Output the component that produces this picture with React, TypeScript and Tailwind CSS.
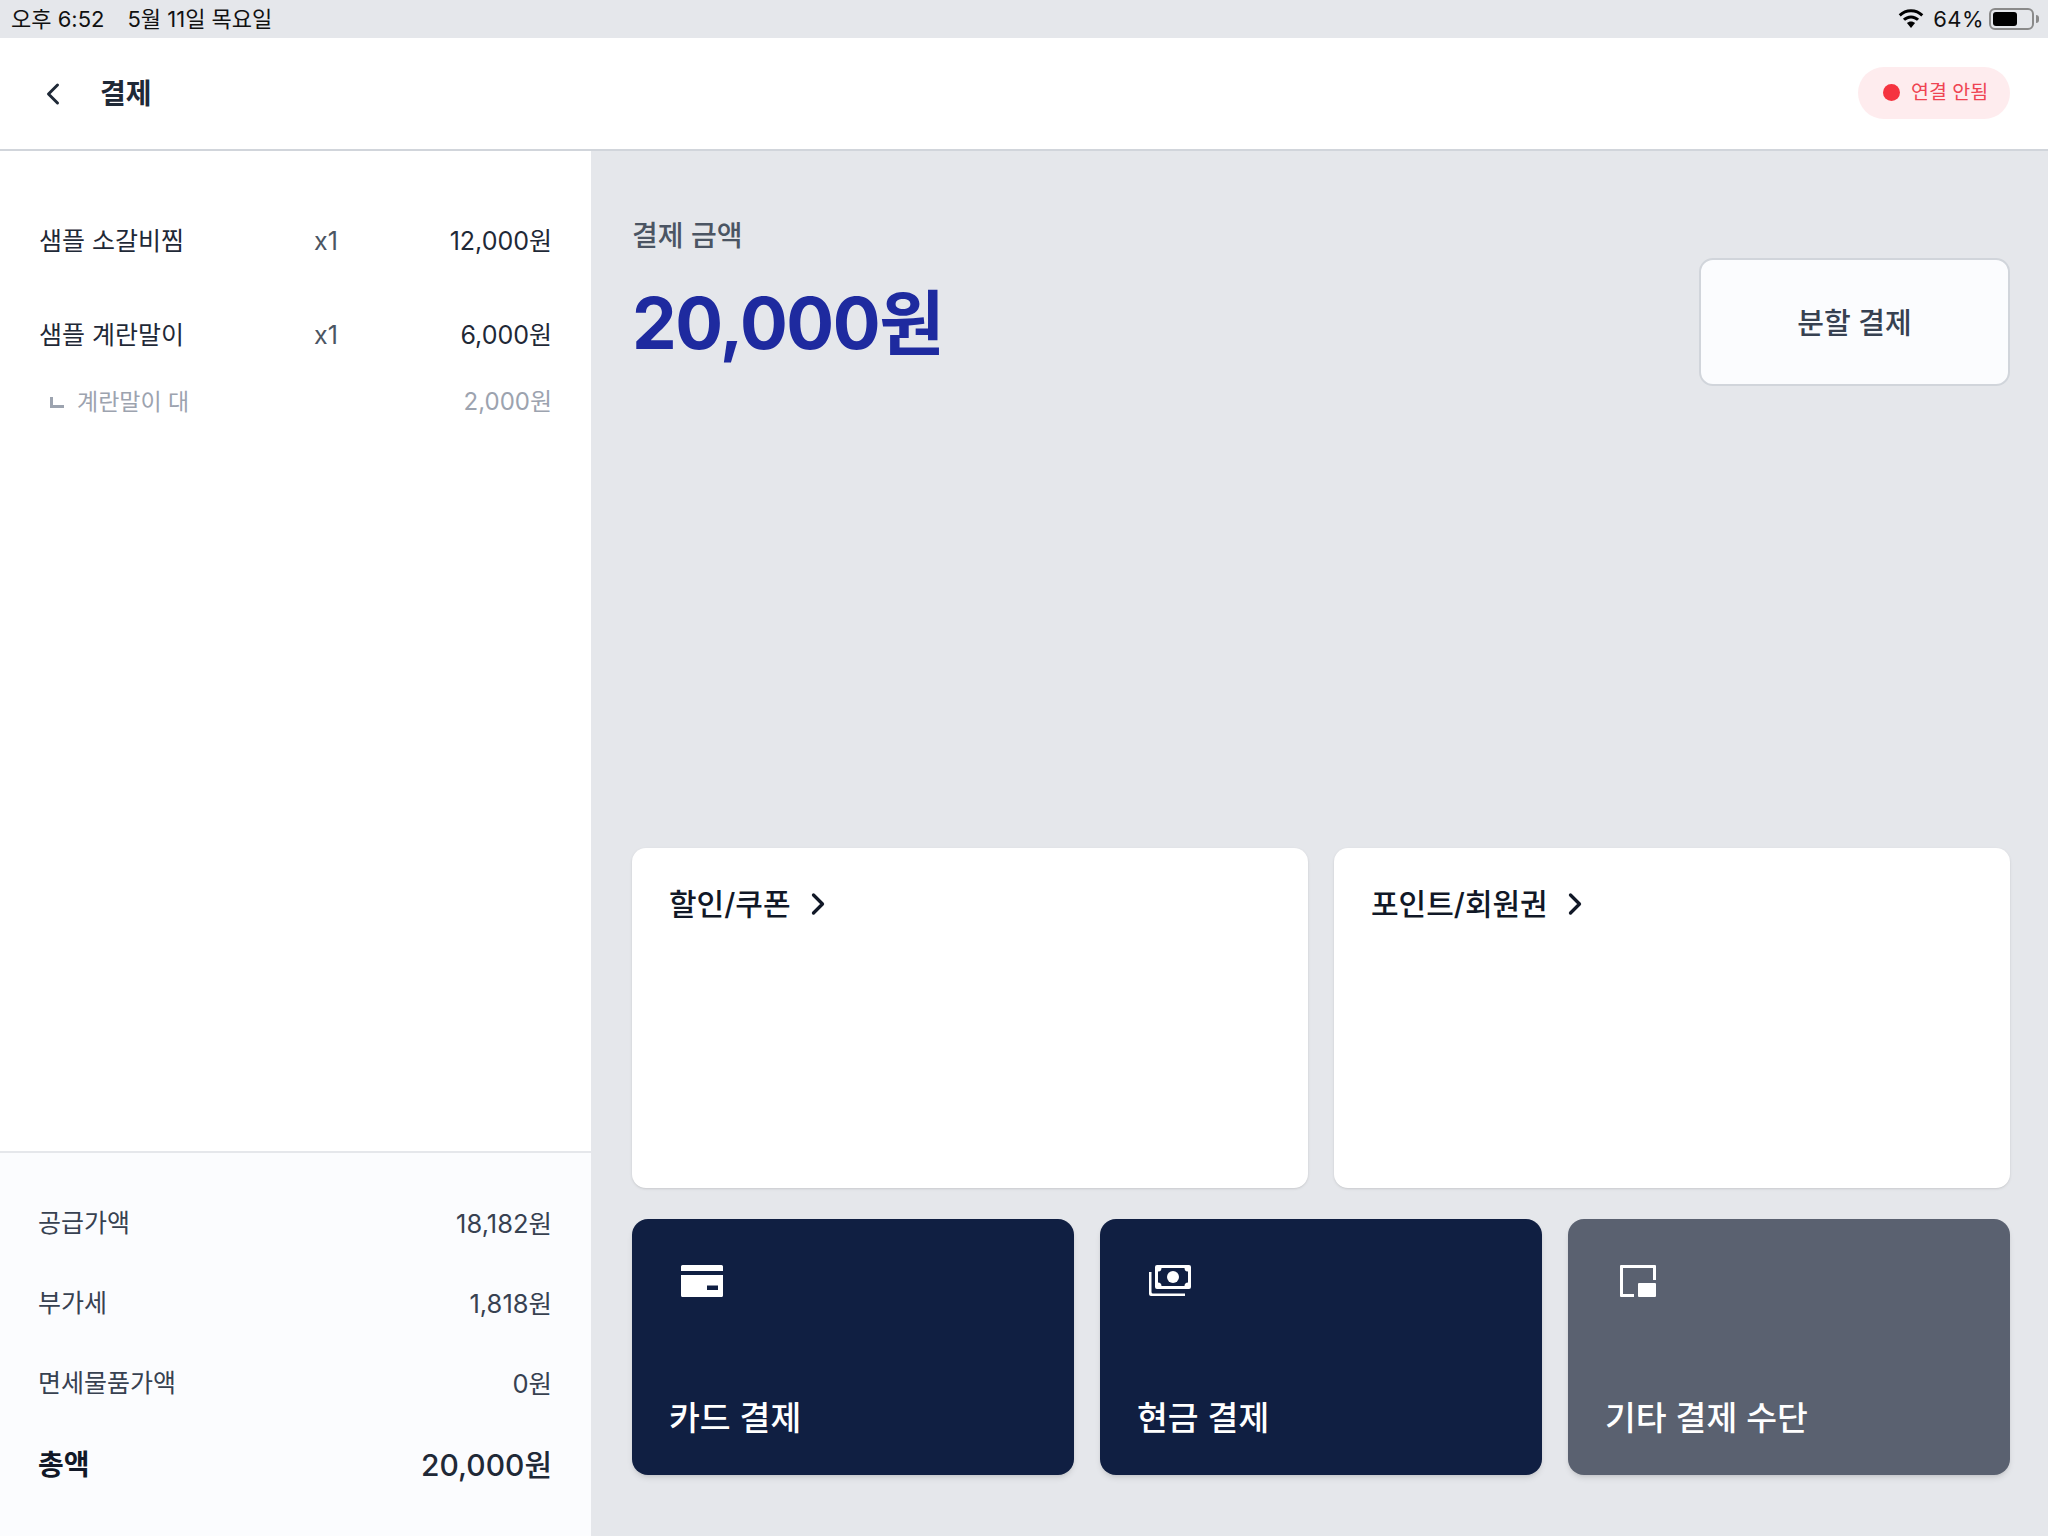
import React from 'react';
import { ChevronLeft, ChevronRight } from 'lucide-react';

const items = [
  { name: '샘플 소갈비찜', qty: 'x1', price: '12,000원' },
  { name: '샘플 계란말이', qty: 'x1', price: '6,000원' },
];

const summary = [
  { label: '공급가액', value: '18,182원' },
  { label: '부가세', value: '1,818원' },
  { label: '면세물품가액', value: '0원' },
];

const WifiIcon = () => (
  <svg width="28" height="21" viewBox="0 0 26 20" fill="#000">
    <path d="M13 3.2c3.8 0 7.2 1.5 9.8 3.9l1.9-2.1C21.6 2 17.5.2 13 .2S4.400 2 1.300 5l1.900 2.100C5.800 4.700 9.200 3.200 13 3.200z" />
    <path d="M13 9c2.200 0 4.200.9 5.700 2.300l2-2.100C18.700 7.300 16 6.100 13 6.100S7.300 7.300 5.300 9.200l2 2.100C8.800 9.900 10.800 9 13 9z" />
    <path d="M13 11.900c-1.500 0-2.900.6-3.900 1.500L13 18l3.900-4.600c-1-.9-2.400-1.500-3.900-1.500z" />
  </svg>
);

const CardIcon = () => (
  <svg width="42" height="32" viewBox="0 0 42 32" fill="#fff">
    <path d="M1.500 0h39A1.500 1.500 0 0 1 42 1.500V6H0V1.500A1.500 1.500 0 0 1 1.500 0z" />
    <path fillRule="evenodd" d="M0 10h42v20.500a1.500 1.500 0 0 1-1.500 1.500h-39A1.500 1.500 0 0 1 0 30.500V10zm26 10.500V25h11v-4.500H26z" />
  </svg>
);

const CashIcon = () => (
  <svg width="42" height="31" viewBox="0 0 42 31" fill="#fff">
    <path fillRule="evenodd" d="M8 0h32a2 2 0 0 1 2 2v20a2 2 0 0 1-2 2H8a2 2 0 0 1-2-2V2a2 2 0 0 1 2-2zm4.500 3A3.500 3.500 0 0 1 9 6.500v11a3.500 3.500 0 0 1 3.500 3.500h23a3.500 3.500 0 0 1 3.500-3.500v-11A3.500 3.500 0 0 1 35.500 3h-23z" />
    <circle cx="24" cy="12" r="6" />
    <path d="M0 7h2.500v20a1.500 1.500 0 0 0 1.500 1.500h32V31H2a2 2 0 0 1-2-2V7z" />
  </svg>
);

const OtherIcon = () => (
  <svg width="36" height="32" viewBox="0 0 36 32" fill="#fff">
    <path d="M1 0h34a1 1 0 0 1 1 1v14h-3V3H3v26h11v3H1a1 1 0 0 1-1-1V1a1 1 0 0 1 1-1z" />
    <rect x="18" y="18" width="18" height="14" rx="1" />
  </svg>
);

const payMethods = [
  { label: '카드 결제', icon: <CardIcon />, bg: 'bg-[#101f42]', indent: 'pl-[12px]' },
  { label: '현금 결제', icon: <CashIcon />, bg: 'bg-[#101f42]', indent: 'pl-[12px]' },
  { label: '기타 결제 수단', icon: <OtherIcon />, bg: 'bg-[#5a6170]', indent: 'pl-[15px]' },
];

export default function App() {
  return (
    <div
      lang="ko"
      className="flex h-[1536px] w-[2048px] flex-col overflow-hidden bg-[#e5e7eb] [font-family:Inter,'Noto_Sans_CJK_KR',sans-serif]"
    >
      {/* status bar */}
      <div className="flex h-[38px] items-center justify-between pl-[11px] pr-[9px] text-[22px] text-[#111]">
        <div className="flex gap-[23px]">
          <span>오후 6:52</span>
          <span>5월 11일 목요일</span>
        </div>
        <div className="flex items-center">
          <WifiIcon />
          <span className="ml-[8px] tracking-[0.02em]">64%</span>
          <div className="ml-[5px] flex h-[22px] w-[45px] items-center rounded-[6px] border-2 border-[#8a8a8a] pl-[2px]">
            <div className="h-[14px] w-[24px] rounded-[3px] bg-black" />
          </div>
          <div className="ml-[2px] h-[8px] w-[3px] rounded-r-full bg-[#8a8a8a]" />
        </div>
      </div>

      {/* header */}
      <div className="flex h-[113px] shrink-0 items-center justify-between border-b-2 border-[#d1d5db] bg-white pl-[35px] pr-[38px]">
        <div className="flex items-center">
          <ChevronLeft size={36} strokeWidth={2} className="text-[#1f2937]" />
          <h1 className="ml-[29px] text-[28px] font-bold text-[#1f2937]">결제</h1>
        </div>
        <div className="mb-[2px] flex h-[52px] w-[152px] items-center rounded-full bg-[#feecee] pl-[25px]">
          <span className="h-[17px] w-[17px] rounded-full bg-[#f5333f]" />
          <span className="ml-[11px] pt-[1px] text-[19.5px] text-[#ef4452]">연결 안됨</span>
        </div>
      </div>

      <div className="flex min-h-0 flex-1">
        {/* order panel */}
        <div className="flex w-[591px] shrink-0 flex-col bg-white">
          <div className="pl-[39px] pr-[39px] pt-[71px] text-[25px] text-[#1f2937]">
            {items.map((item, i) => (
              <div
                key={item.name}
                className={`grid h-[40px] grid-cols-[275px_1fr_auto] items-center ${i > 0 ? 'mt-[54px]' : ''}`}
              >
                <span>{item.name}</span>
                <span className="text-[#4b5563]">{item.qty}</span>
                <span>{item.price}</span>
              </div>
            ))}
            <div className="mt-[26px] flex h-[40px] items-center justify-between text-[#9ca3af]">
              <div className="flex items-center">
                <svg width="14" height="11" viewBox="0 0 14 11" className="ml-[11px]" fill="#9ca3af">
                  <path d="M0 0h3v8h11v3H0z" />
                </svg>
                <span className="ml-[13px] text-[23px]">계란말이 대</span>
              </div>
              <span className="text-[24px]">2,000원</span>
            </div>
          </div>

          <div className="mt-auto border-t-2 border-[#e5e7eb] bg-[#fbfcfe] pb-[51px] pl-[38px] pr-[39px] pt-[51px]">
            <div className="flex flex-col gap-[40px] text-[25px] text-[#374151]">
              {summary.map((row) => (
                <div key={row.label} className="flex h-[40px] items-center justify-between">
                  <span>{row.label}</span>
                  <span className="text-[25.5px]">{row.value}</span>
                </div>
              ))}
            </div>
            <div className="mt-[41px] flex h-[40px] items-center justify-between font-semibold">
              <span className="text-[28px] text-[#111827]">총액</span>
              <span className="text-[30px] font-medium text-[#1f2937]">20,000원</span>
            </div>
          </div>
        </div>

        {/* payment */}
        <div className="flex flex-1 flex-col pb-[61px] pl-[41px] pr-[38px]">
          <div className="flex items-start justify-between pt-[65px]">
            <div>
              <div className="text-[28px] font-medium leading-[40px] text-[#4b5563]">결제 금액</div>
              <div className="mt-[25px] text-[71px] font-bold leading-[84px] tracking-[-0.02em] text-[#1e2a9f]">20,000원</div>
            </div>
            <button className="mt-[42px] h-[128px] w-[311px] rounded-[14px] border-2 border-[#d1d5db] bg-[#fbfcfe] pt-[4px] text-[29px] font-medium text-[#374151]">
              분할 결제
            </button>
          </div>

          <div className="mt-auto grid h-[340px] grid-cols-2 gap-[26px]">
            <div className="flex items-start rounded-[14px] bg-white p-[37px] pt-[36px] shadow-sm">
              <div className="flex items-center text-[30px] font-medium leading-[40px] text-[#111827]">
                할인/쿠폰
                <ChevronRight size={36} strokeWidth={2.2} className="ml-[9px]" />
              </div>
            </div>
            <div className="flex items-start rounded-[14px] bg-white p-[37px] pt-[36px] shadow-sm">
              <div className="flex items-center text-[30px] font-medium leading-[40px] text-[#111827]">
                포인트/회원권
                <ChevronRight size={36} strokeWidth={2.2} className="ml-[9px]" />
              </div>
            </div>
          </div>

          <div className="mt-[31px] grid h-[256px] grid-cols-3 gap-[26px]">
            {payMethods.map((m) => (
              <button
                key={m.label}
                className={`flex flex-col items-start justify-between rounded-[16px] px-[37px] pb-[35px] pt-[46px] text-white shadow-md ${m.bg}`}
              >
                <span className={m.indent}>{m.icon}</span>
                <span className="text-[33.5px] font-medium leading-[44px]">{m.label}</span>
              </button>
            ))}
          </div>
        </div>
      </div>
    </div>
  );
}
